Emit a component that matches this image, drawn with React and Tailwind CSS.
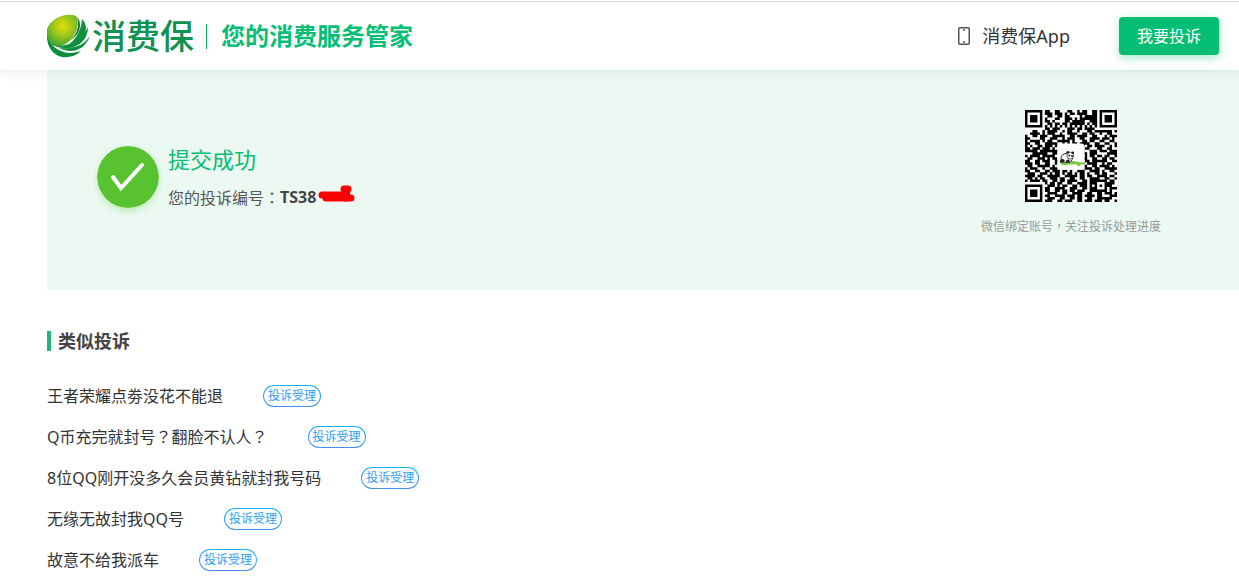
const complaints = [
  "王者荣耀点劵没花不能退",
  "Q币充完就封号？翻脸不认人？",
  "8位QQ刚开没多久会员黄钻就封我号码",
  "无缘无故封我QQ号",
  "故意不给我派车",
];

const qrRows = [
  "#######.##..##...##..#.##..##.#######",
  "#.....#.###.###.#.##.####..##.#.....#",
  "#.###.#..##..##.##....#.#####.#.###.#",
  "#.###.#.#...##..###.#.#######.#.###.#",
  "#.###.#.##.#....##.#####..###.#.###.#",
  "#.....#..##.##.##.######.#.##.#.....#",
  "#######.#.#.#.#.#.#.#.#.#.#.#.#######",
  "........##.###...###.##.####.........",
  "...##..#.####..#.##..#...##.#######.#",
  "..####.#.###..#..####..##.##..#..##..",
  "#..##.###..#####..##.####..##...#.###",
  "##....##..###..#.###..##..####.###.#.",
  "#.####.#.##..#####.#...##.##..##..##.",
  "##..##..#####..#.#.##.####..##..##..#",
  "#.#..##.###.#..........#.##.####..#.#",
  "##.###.###.#............##...##..##..",
  "#####.########.........#..###.###.###",
  "...######..##..........##.###....####",
  "#.####.#####............#.##.##.##..#",
  ".##..###.#.##..........##..##..##.##.",
  "##..##.###..##..........##.######..##",
  "###.##..##..#..........#.####..#.##..",
  ".##..#####.#...........##..##.####.#.",
  "#.###..#..###...........###.##..#####",
  "##..##..##.###.##.#..###..####.#..##.",
  ".###..###.#.##.#.##.#.##.#..##.##...#",
  "####.##..#####..#####.##.##..####.##.",
  ".##.#.##..###.##..##..##..####..##..#",
  "#.####.##..##.##.####..##.#######.##.",
  "........#.##.##..##..####.###...####.",
  "#######..###.#.##..##.###.#.#.#.###..",
  "#.....#.##..####..###..##.###...#.###",
  "#.###.#.##..##.##.##.###..#######.#..",
  "#.###.#..####..##..####..##..##.###.#",
  "#.###.#.##..####.###.##.####.##...###",
  "#.....#..###..##..##.##..##..######..",
  "#######.###..##.###..##.###.###.##..#",
];

const qrPath = qrRows
  .map((row, y) => [...row.matchAll(/#+/g)].map((run) => `M${run.index} ${y}h${run[0].length}v1h-${run[0].length}z`).join(""))
  .join("");

function LogoMark() {
  return (
    <svg viewBox="0 0 44 44" className="size-11 shrink-0" aria-hidden="true">
      <defs>
        <radialGradient id="globe" cx="16" cy="12" r="24" gradientUnits="userSpaceOnUse">
          <stop offset="0" stopColor="#e4dd0b" />
          <stop offset="0.45" stopColor="#94c51c" />
          <stop offset="1" stopColor="#239a37" />
        </radialGradient>
        <linearGradient id="leaf" x1="0" y1="0" x2="1" y2="1">
          <stop offset="0" stopColor="#27a53b" />
          <stop offset="1" stopColor="#03843d" />
        </linearGradient>
      </defs>
      <path d="M29 2C19-2 4 4 0 15c-2 8 1 15 7 17 7 2 16-3 20-11 4-6 5-14 2-19Z" fill="url(#globe)" />
      <path d="M30 3c3 8 0 17-6 23 5-3 9-9 9-15 0-3-1-6-3-8Z" fill="#176f2c" />
      <path d="M35 5c4 4 5 9 3 14-3 7-9 11-17 12 7-5 13-13 14-26Z" fill="url(#leaf)" />
      <path d="M41 13c0 12-8 19-18 21-5 1-10 0-15-2 11 0 20-3 25-8 4-4 6-7 8-11Z" fill="url(#leaf)" />
      <path d="M43 22c-3 8-9 14-18 15-5 0-10-1-13-3 9 1 18-1 23-4 4-3 6-5 8-8Z" fill="url(#leaf)" />
      <path d="M0 22c3 10 12 16 22 17 4 0 8-1 12-2-5 5-12 7-19 6C6 41 0 33 0 22Z" fill="#0b8d3e" />
    </svg>
  );
}

function PhoneIcon() {
  return (
    <svg viewBox="0 0 12 18" className="h-[18px] w-3" fill="none" stroke="#555" aria-hidden="true">
      <rect x="0.75" y="0.75" width="10.5" height="16.5" rx="1" strokeWidth="1.5" />
      <path d="M5 3h2M5 15h2" strokeWidth="1.5" />
    </svg>
  );
}

function QrCode() {
  return (
    <svg viewBox="0 0 37 37" className="size-[92px]" role="img" aria-label="微信二维码">
      <rect width="37" height="37" fill="#fff" />
      <path d={qrPath} fill="#000" />
      <rect x="13" y="13.5" width="11" height="10.5" rx="1.5" fill="#fff" />
      <path d="M14.5 21.3c2-1 4-1 6-.6s2.5.6 3.5.1v1l-1.5.1-1 .8-.8-.8c-2-.2-4 .4-6 .1Z" fill="#77c83b" />
      <ellipse cx="16.8" cy="19.3" rx="2.3" ry="1.8" fill="#fff" stroke="#222" strokeWidth="0.4" />
      <circle cx="18.2" cy="18.3" r="1.4" fill="#fff" stroke="#222" strokeWidth="0.3" />
      <circle cx="17.2" cy="17" r="0.5" fill="#111" />
      <circle cx="19.2" cy="17.2" r="0.5" fill="#111" />
      <circle cx="17.8" cy="18.3" r="0.4" fill="#111" />
      <circle cx="18.9" cy="18.5" r="0.4" fill="#111" />
      <path d="M14.2 20c.8-.6 1.6-.3 1.8.4l-.6.8h-1.4ZM16.5 20.2l1.2-.4.4 1.3h-1.5Z" fill="#222" />
    </svg>
  );
}

// Full-width punctuation sits in the middle of its cell in the TC face.
function CenteredPunctuation({ text }) {
  return text.split(/([？：，])/).map((part, index) =>
    index % 2 ? (
      <span key={index} className="font-['Noto_Sans_CJK_TC',sans-serif]">
        {part}
      </span>
    ) : (
      part
    )
  );
}

function Header() {
  return (
    <header className="relative z-10 flex h-[70px] items-center justify-between bg-white pr-5 pl-[47px] shadow-[0_2px_12px_rgba(0,0,0,0.09)]">
      <a href="#" className="flex items-center pt-0.5">
        <LogoMark />
        <span className="ml-px text-[34px] leading-10 font-medium text-[#0f9152]">消费保</span>
        <span className="ml-3 h-[25px] w-px bg-[#0aaa66]" />
        <span className="ml-3.5 text-2xl font-bold text-[#04bf75]">您的消费服务管家</span>
      </a>
      <nav className="flex items-center pt-0.5">
        <a href="#" className="flex items-center gap-3 text-lg text-[#333]">
          <PhoneIcon />
          消费保App
        </a>
        <button
          type="button"
          className="ml-[49px] h-[38px] w-[100px] rounded bg-[#04be73] text-base text-white shadow-[0_3px_10px_rgba(4,190,115,0.35)]"
        >
          我要投诉
        </button>
      </nav>
    </header>
  );
}

function SuccessBanner() {
  return (
    <section className="flex h-[220px] justify-between bg-[#ebf9f2] pr-[78px] pl-[50px]">
      <div className="flex items-center gap-[9px] pb-1.5">
        <svg viewBox="0 0 62 62" className="size-[62px] rounded-full shadow-[0_3px_6px_rgba(88,194,48,0.3)]" aria-hidden="true">
          <circle cx="31" cy="31" r="31" fill="#58c230" />
          <path d="m16 31 8 11 21-23" fill="none" stroke="#fff" strokeWidth="4" strokeLinecap="round" />
        </svg>
        <div>
          <h1 className="text-[22px] leading-7 text-[#04be73]">提交成功</h1>
          <p className="mt-3 flex items-center text-base leading-6 text-[#555]">
            <span>
              <CenteredPunctuation text="您的投诉编号：" />
            </span>
            <strong className="text-[#444]">TS38</strong>
            <svg viewBox="0 0 38 20" className="ml-0.5 -mt-1.5 h-5 w-[38px]" fill="none" stroke="#f00" strokeLinecap="round" aria-hidden="true">
              <path d="M4 11h22M8 14h25" strokeWidth="7" />
              <path d="M26 5h4M29 6l-1 8" strokeWidth="7" />
            </svg>
          </p>
        </div>
      </div>
      <div className="flex flex-col items-center pt-10">
        <QrCode />
        <p className="mt-3.5 text-xs leading-5 text-[#999]">
          <CenteredPunctuation text="微信绑定账号，关注投诉处理进度" />
        </p>
      </div>
    </section>
  );
}

function StatusBadge({ children }) {
  return (
    <span className="rounded-full bg-linear-to-b from-[#12b5fb] to-[#438ef0] p-px">
      <span className="block rounded-full bg-white px-1 text-xs leading-5 text-[#2ba0f5]">{children}</span>
    </span>
  );
}

function SimilarComplaints() {
  return (
    <section className="pt-[37px]">
      <h2 className="flex items-center gap-[7px] text-lg leading-7 font-bold text-[#444]">
        <span className="h-5 w-1 bg-[#22b47c]" />
        类似投诉
      </h2>
      <ul className="mt-5">
        {complaints.map((title) => (
          <li key={title} className="flex h-[41px] items-center gap-10">
            <a href="#" className="text-base text-[#333]">
              <CenteredPunctuation text={title} />
            </a>
            <StatusBadge>投诉受理</StatusBadge>
          </li>
        ))}
      </ul>
    </section>
  );
}

export default function App() {
  return (
    <div className="bg-white font-['Noto_Sans','Noto_Sans_CJK_SC',sans-serif]">
      <div className="relative z-20 -mb-0.5 border-b border-[#ddd] pt-px" />
      <Header />
      <main className="pl-[47px]">
        <SuccessBanner />
        <SimilarComplaints />
      </main>
    </div>
  );
}
